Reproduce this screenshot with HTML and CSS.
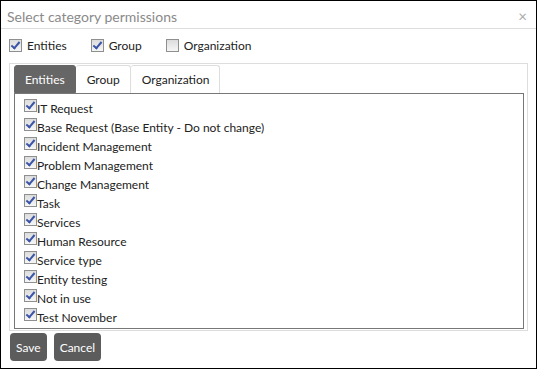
FILE: index.html
```html
<!doctype html>
<html>
    <head>
        <title>Select category permissions</title>
        <meta charset="utf-8">
        <link rel="stylesheet" href="styles.css">
    </head>
    <body>
        <div class="dialog">
            <div class="titlebar">
                <span class="title">Select category permissions</span>
                <span class="close">&times;</span>
            </div>
            <div class="toprow">
                <label class="check"><span class="box on"></span>Entities</label>
                <label class="check"><span class="box on"></span>Group</label>
                <label class="check"><span class="box"></span>Organization</label>
            </div>
            <div class="panel">
                <div class="tabs">
                    <div class="tab active">Entities</div>
                    <div class="tab">Group</div>
                    <div class="tab">Organization</div>
                </div>
                <div class="list">
                    <div class="item"><span class="box on"></span>IT Request</div>
                    <div class="item"><span class="box on"></span>Base Request (Base Entity - Do not change)</div>
                    <div class="item"><span class="box on"></span>Incident Management</div>
                    <div class="item"><span class="box on"></span>Problem Management</div>
                    <div class="item"><span class="box on"></span>Change Management</div>
                    <div class="item"><span class="box on"></span>Task</div>
                    <div class="item"><span class="box on"></span>Services</div>
                    <div class="item"><span class="box on"></span>Human Resource</div>
                    <div class="item"><span class="box on"></span>Service type</div>
                    <div class="item"><span class="box on"></span>Entity testing</div>
                    <div class="item"><span class="box on"></span>Not in use</div>
                    <div class="item"><span class="box on"></span>Test November</div>
                </div>
            </div>
            <div class="buttons">
                <button class="btn">Save</button>
                <button class="btn">Cancel</button>
            </div>
        </div>
    </body>
</html>
```

FILE: styles.css
```css
html, body {
    margin: 0;
    padding: 0;
    background: #ffffff;
}
.dialog {
    width: 537px;
    height: 369px;
    box-sizing: border-box;
    border: 1px solid #000000;
    font-family: Lato, "Open Sans", sans-serif;
    font-size: 12px;
    color: #222222;
    overflow: hidden;
}
.titlebar {
    height: 28px;
    box-sizing: border-box;
    border-bottom: 1px solid #dddddd;
    display: flex;
    align-items: center;
    justify-content: space-between;
    padding: 3px 9px 0 6px;
}
.title {
    font-size: 14px;
    color: #8a8a8a;
}
.close {
    font-size: 15px;
    color: #aaaaaa;
}
.toprow {
    display: flex;
    padding: 7px 0 0 8px;
    height: 26px;
    box-sizing: border-box;
    align-items: center;
}
.check {
    display: flex;
    align-items: center;
    margin-right: 24px;
}
.check .box {
    margin-right: 5px;
}
.box {
    width: 11px;
    height: 11px;
    border: 1px solid #8e8f8f;
    background: linear-gradient(#dcdcdc, #f6f6f6);
    display: inline-block;
    position: relative;
    flex: none;
}
.box.on::after {
    content: "";
    position: absolute;
    left: 3px;
    top: 0px;
    width: 3px;
    height: 7px;
    border-right: 2px solid #3a55a8;
    border-bottom: 2px solid #3a55a8;
    transform: rotate(40deg);
}
.panel {
    margin: 8px 8px 0 8px;
    border: 1px solid #dddddd;
    padding: 1px 3px 3px 4px;
    height: 268px;
    box-sizing: border-box;
}
.tabs {
    display: flex;
    height: 28px;
}
.tab {
    padding: 0 10px 0 11px;
    display: flex;
    align-items: center;
    border: 1px solid #dddddd;
    border-bottom: none;
    border-left: none;
    border-radius: 3px 3px 0 0;
    color: #222222;
}
.tab.active {
    background: #666666;
    color: #ffffff;
    border: 1px solid #666666;
    padding: 0 10px;
}
.list {
    border: 1px solid #777777;
    height: 236px;
    box-sizing: border-box;
    padding: 3px 0 0 9px;
}
.item {
    display: flex;
    align-items: flex-end;
    height: 19px;
}
.item .box {
    margin-bottom: 4px;
}
.buttons {
    display: flex;
    gap: 7px;
    padding: 2px 0 0 9px;
}
.btn {
    background: #5c5c5c;
    color: #ffffff;
    border: none;
    border-radius: 4px;
    height: 28px;
    padding: 0 6px;
    font-family: Lato, "Open Sans", sans-serif;
    font-size: 12px;
}
```
